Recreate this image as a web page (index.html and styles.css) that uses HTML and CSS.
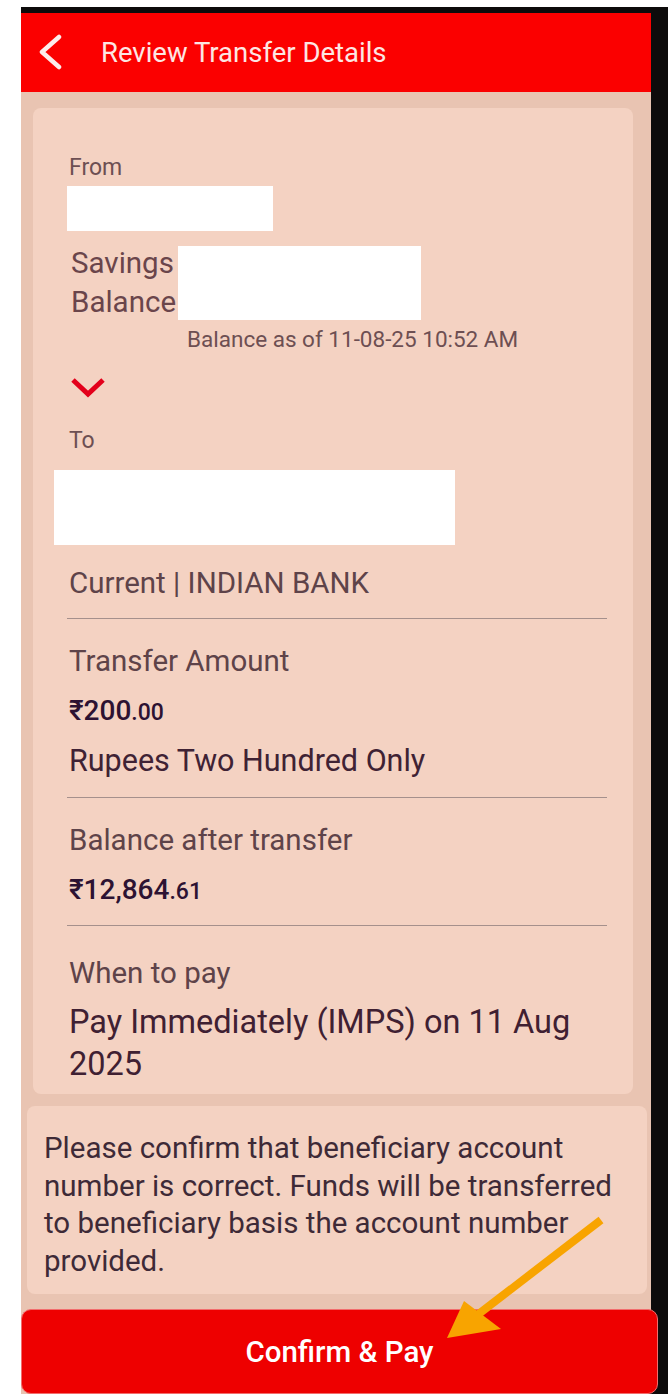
FILE: index.html
```html
<!DOCTYPE html>
<html lang="en">
<head>
    <meta charset="UTF-8">
    <meta name="viewport" content="width=device-width, initial-scale=1.0">
    <title>Review Transfer Details</title>
    <link rel="stylesheet" href="styles.css">
</head>
<body>
    <div class="device">
        <div class="screen">
            <div class="topbar">
                <svg class="back" width="26" height="36" viewBox="0 0 26 36">
                    <polyline points="21,3 4,18 21,33" fill="none" stroke="#fdeceb" stroke-width="4.5" stroke-linecap="round" stroke-linejoin="round"/>
                </svg>
                <h1>Review Transfer Details</h1>
            </div>

            <div class="card details">
                <p class="label">From</p>
                <div class="mask mask-from"></div>

                <div class="account-row">
                    <div class="account-type">
                        <span>Savings</span>
                        <span>Balance</span>
                    </div>
                    <div class="mask mask-balance"></div>
                </div>
                <p class="as-of">Balance as of 11-08-25 10:52 AM</p>

                <svg class="expand" width="36" height="22" viewBox="0 0 36 22">
                    <polyline points="3,3 18,17 33,3" fill="none" stroke="#e3001b" stroke-width="5" stroke-linejoin="miter"/>
                </svg>

                <p class="label to">To</p>
                <div class="mask mask-to"></div>
                <p class="value bank">Current | INDIAN BANK</p>

                <hr>

                <p class="value heading">Transfer Amount</p>
                <p class="amount">₹200<small>.00</small></p>
                <p class="words">Rupees Two Hundred Only</p>

                <hr>

                <p class="value heading">Balance after transfer</p>
                <p class="amount">₹12,864<small>.61</small></p>

                <hr>

                <p class="value heading when">When to pay</p>
                <p class="schedule">Pay Immediately (IMPS) on 11 Aug 2025</p>
            </div>

            <div class="card notice">
                <p>Please confirm that beneficiary account number is correct. Funds will be transferred to beneficiary basis the account number provided.</p>
            </div>

            <button class="pay-btn">Confirm &amp; Pay</button>
        </div>
    </div>

    <!-- annotation arrow drawn over the photo -->
    <svg class="pointer" width="668" height="1394" viewBox="0 0 668 1394">
        <line x1="601" y1="1220" x2="476" y2="1316" stroke="#f8a400" stroke-width="8"/>
        <polygon points="447,1338 464,1301 501,1329" fill="#f8a400"/>
    </svg>
</body>
</html>
```

FILE: styles.css
```css
body {
    margin: 0;
    padding-top: 7px;
    background-color: #fff;
    font-family: Roboto, "Noto Sans", "DejaVu Sans", sans-serif;
}
p {
    margin: 0;
}
.device {
    margin-left: 21px;
    height: 1387px;
    box-sizing: border-box;
    padding: 6px 17px 0 0;
    background-color: #0d0b0b;
}
.screen {
    height: 100%;
    background-color: #e9c4b2;
    display: flex;
    flex-direction: column;
    border-bottom-right-radius: 22px;
}
.topbar {
    height: 79px;
    background-color: #fb0000;
    display: flex;
    align-items: center;
    padding-left: 17px;
}
.back {
    display: block;
    margin-top: -2px;
}
.topbar h1 {
    margin: 0 0 0 37px;
    font-size: 27.5px;
    font-weight: 400;
    color: #fde6e3;
}

.card {
    background-color: #f4d2c2;
    border-radius: 8px;
}
.details {
    margin: 16px 18px 0 12px;
    padding: 47px 26px 9px 36px;
}
.label {
    font-size: 23px;
    line-height: 26px;
    color: #6d4f52;
}
.mask {
    background-color: #fff;
}
.mask-from {
    width: 206px;
    height: 45px;
    margin: 5px 0 0 -2px;
}
.account-row {
    display: flex;
    margin-top: 13px;
    margin-left: 2px;
}
.account-type {
    display: flex;
    flex-direction: column;
    font-size: 29.5px;
    line-height: 39px;
    color: #6a454b;
}
.mask-balance {
    width: 243px;
    height: 74px;
    margin: 2px 0 0 2px;
}
.as-of {
    margin: 4px 0 0 118px;
    font-size: 22.5px;
    line-height: 26px;
    color: #6d4f52;
}
.expand {
    display: block;
    margin: 25px 0 0 1px;
}
.to {
    margin-top: 29px;
}
.mask-to {
    width: 401px;
    height: 75px;
    margin: 16px 0 0 -15px;
}
.value {
    font-size: 29.5px;
    line-height: 36px;
    color: #5e4349;
}
.bank {
    margin-top: 20px;
}
hr {
    border: none;
    border-top: 1px solid #a5908c;
    margin: 17px 0 0 -2px;
}
.heading {
    margin-top: 24px;
}
.amount {
    margin-top: 16px;
    font-size: 28px;
    line-height: 32px;
    font-weight: 500;
    color: #2d1232;
}
.amount small {
    font-size: 23px;
    font-weight: 500;
}
.words {
    margin-top: 13px;
    font-size: 30.5px;
    line-height: 38px;
    color: #3f2234;
}
.when {
    margin-top: 29px;
}
.schedule {
    margin-top: 10px;
    font-size: 32.5px;
    line-height: 42px;
    color: #3f2032;
}

.notice {
    margin: 12px 4px 0 6px;
    padding: 24px 20px 14px 17px;
}
.notice p {
    font-size: 29.5px;
    line-height: 37.5px;
    color: #3e2a37;
}

.pay-btn {
    margin-top: 15px;
    width: calc(100% + 7px);
    height: 85px;
    border: 1px solid #f26d6d;
    border-radius: 10px;
    background-color: #ee0000;
    color: #fff;
    font-family: inherit;
    font-size: 29.5px;
    font-weight: 500;
}

.pointer {
    position: absolute;
    top: 0;
    left: 0;
    pointer-events: none;
}
```
